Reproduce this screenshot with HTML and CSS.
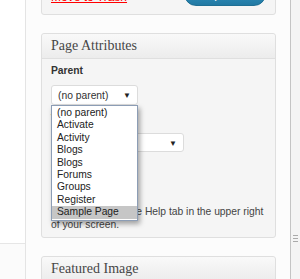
FILE: index.html
```html
<!doctype html>
<html lang="en">
  <head>
    <meta charset="UTF-8" />
    <title>Edit Page</title>
    <link rel="stylesheet" href="styles.css">
  </head>
  <body>
    <div class="wrapper">
      <div class="menu-edge">
        <div class="menu-sep"></div>
      </div>
      <main>
        <div class="box publish">
          <div class="actions">
            <a href="#" class="trash">Move to Trash</a>
            <button class="update">Update</button>
          </div>
        </div>

        <div class="box">
          <h3>Page Attributes</h3>
          <div class="inside">
            <p class="label">Parent</p>
            <div class="select-wrap">
              <div class="select parent">(no parent)<span class="arrow">&#9660;</span></div>
              <ul class="options">
                <li>(no parent)</li>
                <li>Activate</li>
                <li>Activity</li>
                <li>Blogs</li>
                <li>Blogs</li>
                <li>Forums</li>
                <li>Groups</li>
                <li>Register</li>
                <li class="selected">Sample Page</li>
              </ul>
            </div>
            <p class="label">Template</p>
            <div class="select template">Default Template<span class="arrow">&#9660;</span></div>
            <p class="label">Order</p>
            <input class="order" type="text" value="0" />
            <p class="help">Need help? Use the Help tab in the upper right of your screen.</p>
          </div>
        </div>

        <div class="box">
          <h3>Featured Image</h3>
          <div class="inside">
            <a href="#">Set featured image</a>
          </div>
        </div>
      </main>
      <div class="scroll-edge">
        <div class="grip"></div>
      </div>
    </div>
  </body>
</html>
```

FILE: styles.css
```css
html {
  background: #fff;
}
body {
  margin: 0;
  font-family: "Liberation Sans", Arial, sans-serif;
  font-size: 10.3px;
  color: #333;
  overflow: hidden;
}
.wrapper {
  display: flex;
  height: 279px;
  overflow: hidden;
}
.menu-edge {
  width: 25px;
  flex: none;
  border-right: 1px solid #e4e4e4;
  background: #fff;
  padding-top: 243px;
}
.menu-sep {
  border-top: 1px solid #e6e6e6;
  height: 100%;
  background: #fbfbfb;
}
main {
  flex: 1;
  padding: 0 14px 0 15px;
  background: #fcfcfc;
}
.scroll-edge {
  width: 9px;
  flex: none;
  border-left: 1px solid #c4c4c4;
  background: #f4f4f4;
  display: flex;
  justify-content: center;
  align-items: flex-start;
  padding-top: 235px;
}
.grip {
  width: 5px;
  height: 5px;
  border-top: 1px solid #aaa;
  border-bottom: 1px solid #aaa;
  background: linear-gradient(#aaa, #aaa) center / 100% 1px no-repeat;
}

.box {
  border: 1px solid #dfdfdf;
  border-radius: 3px;
  background: #f5f5f5;
  margin-bottom: 18px;
}
.publish {
  margin-top: -30px;
  height: 45px;
  border-radius: 0 0 3px 3px;
  padding: 10px 9px 0;
  box-sizing: border-box;
}
.actions {
  display: flex;
  justify-content: space-between;
  align-items: flex-start;
}
.trash {
  color: #f00;
  font-size: 12px;
  line-height: 24px;
  margin-top: 4px;
  text-decoration: underline;
}
.update {
  width: 82px;
  height: 25px;
  border: 1px solid #1f6f94;
  border-radius: 12px;
  background: linear-gradient(#3a9fd0, #2279a3);
  color: #fff;
  font-family: inherit;
  font-size: 12px;
}

h3 {
  margin: 0;
  height: 24px;
  line-height: 24px;
  padding: 0 9px;
  font-family: "Liberation Serif", Georgia, serif;
  font-size: 14px;
  font-weight: normal;
  color: #464646;
  background: linear-gradient(#f9f9f9, #ececec);
  border-bottom: 1px solid #dfdfdf;
  border-radius: 3px 3px 0 0;
}
.inside {
  padding: 5px 9px 6px;
}
p {
  margin: 0;
}
.label {
  font-weight: bold;
  line-height: 13px;
  color: #333;
}
.select {
  display: flex;
  justify-content: space-between;
  align-items: center;
  box-sizing: border-box;
  height: 20px;
  padding: 1px 6px 0;
  background: #fff;
  border: 1px solid #dcdcdc;
  border-radius: 3px;
  color: #333;
}
.arrow {
  font-size: 8px;
  color: #222;
}
.select-wrap {
  position: relative;
  width: 87px;
  margin: 8px 0 7px;
}
.template {
  width: 133px;
  margin: 8px 0 0;
  height: 19px;
}
.template + .label {
  margin-top: 8px;
}
.options {
  position: absolute;
  top: 100%;
  left: 0;
  width: 100%;
  box-sizing: border-box;
  margin: 0;
  padding: 1px 0;
  list-style: none;
  background: #fff;
  border: 1px solid #8c9db5;
  box-shadow: 2px 3px 5px rgba(0, 0, 0, 0.35);
  z-index: 2;
}
.options li {
  height: 12.4px;
  line-height: 12.4px;
  padding: 0 5px;
  color: #222;
}
.options li.selected {
  background: #c6c6c6;
}
.order {
  display: block;
  width: 40px;
  height: 18px;
  box-sizing: border-box;
  margin: 7px 0 0;
  border: 1px solid #dcdcdc;
  font-size: 10px;
}
.help {
  margin-top: 8px;
  line-height: 12.5px;
  color: #444;
}
```
